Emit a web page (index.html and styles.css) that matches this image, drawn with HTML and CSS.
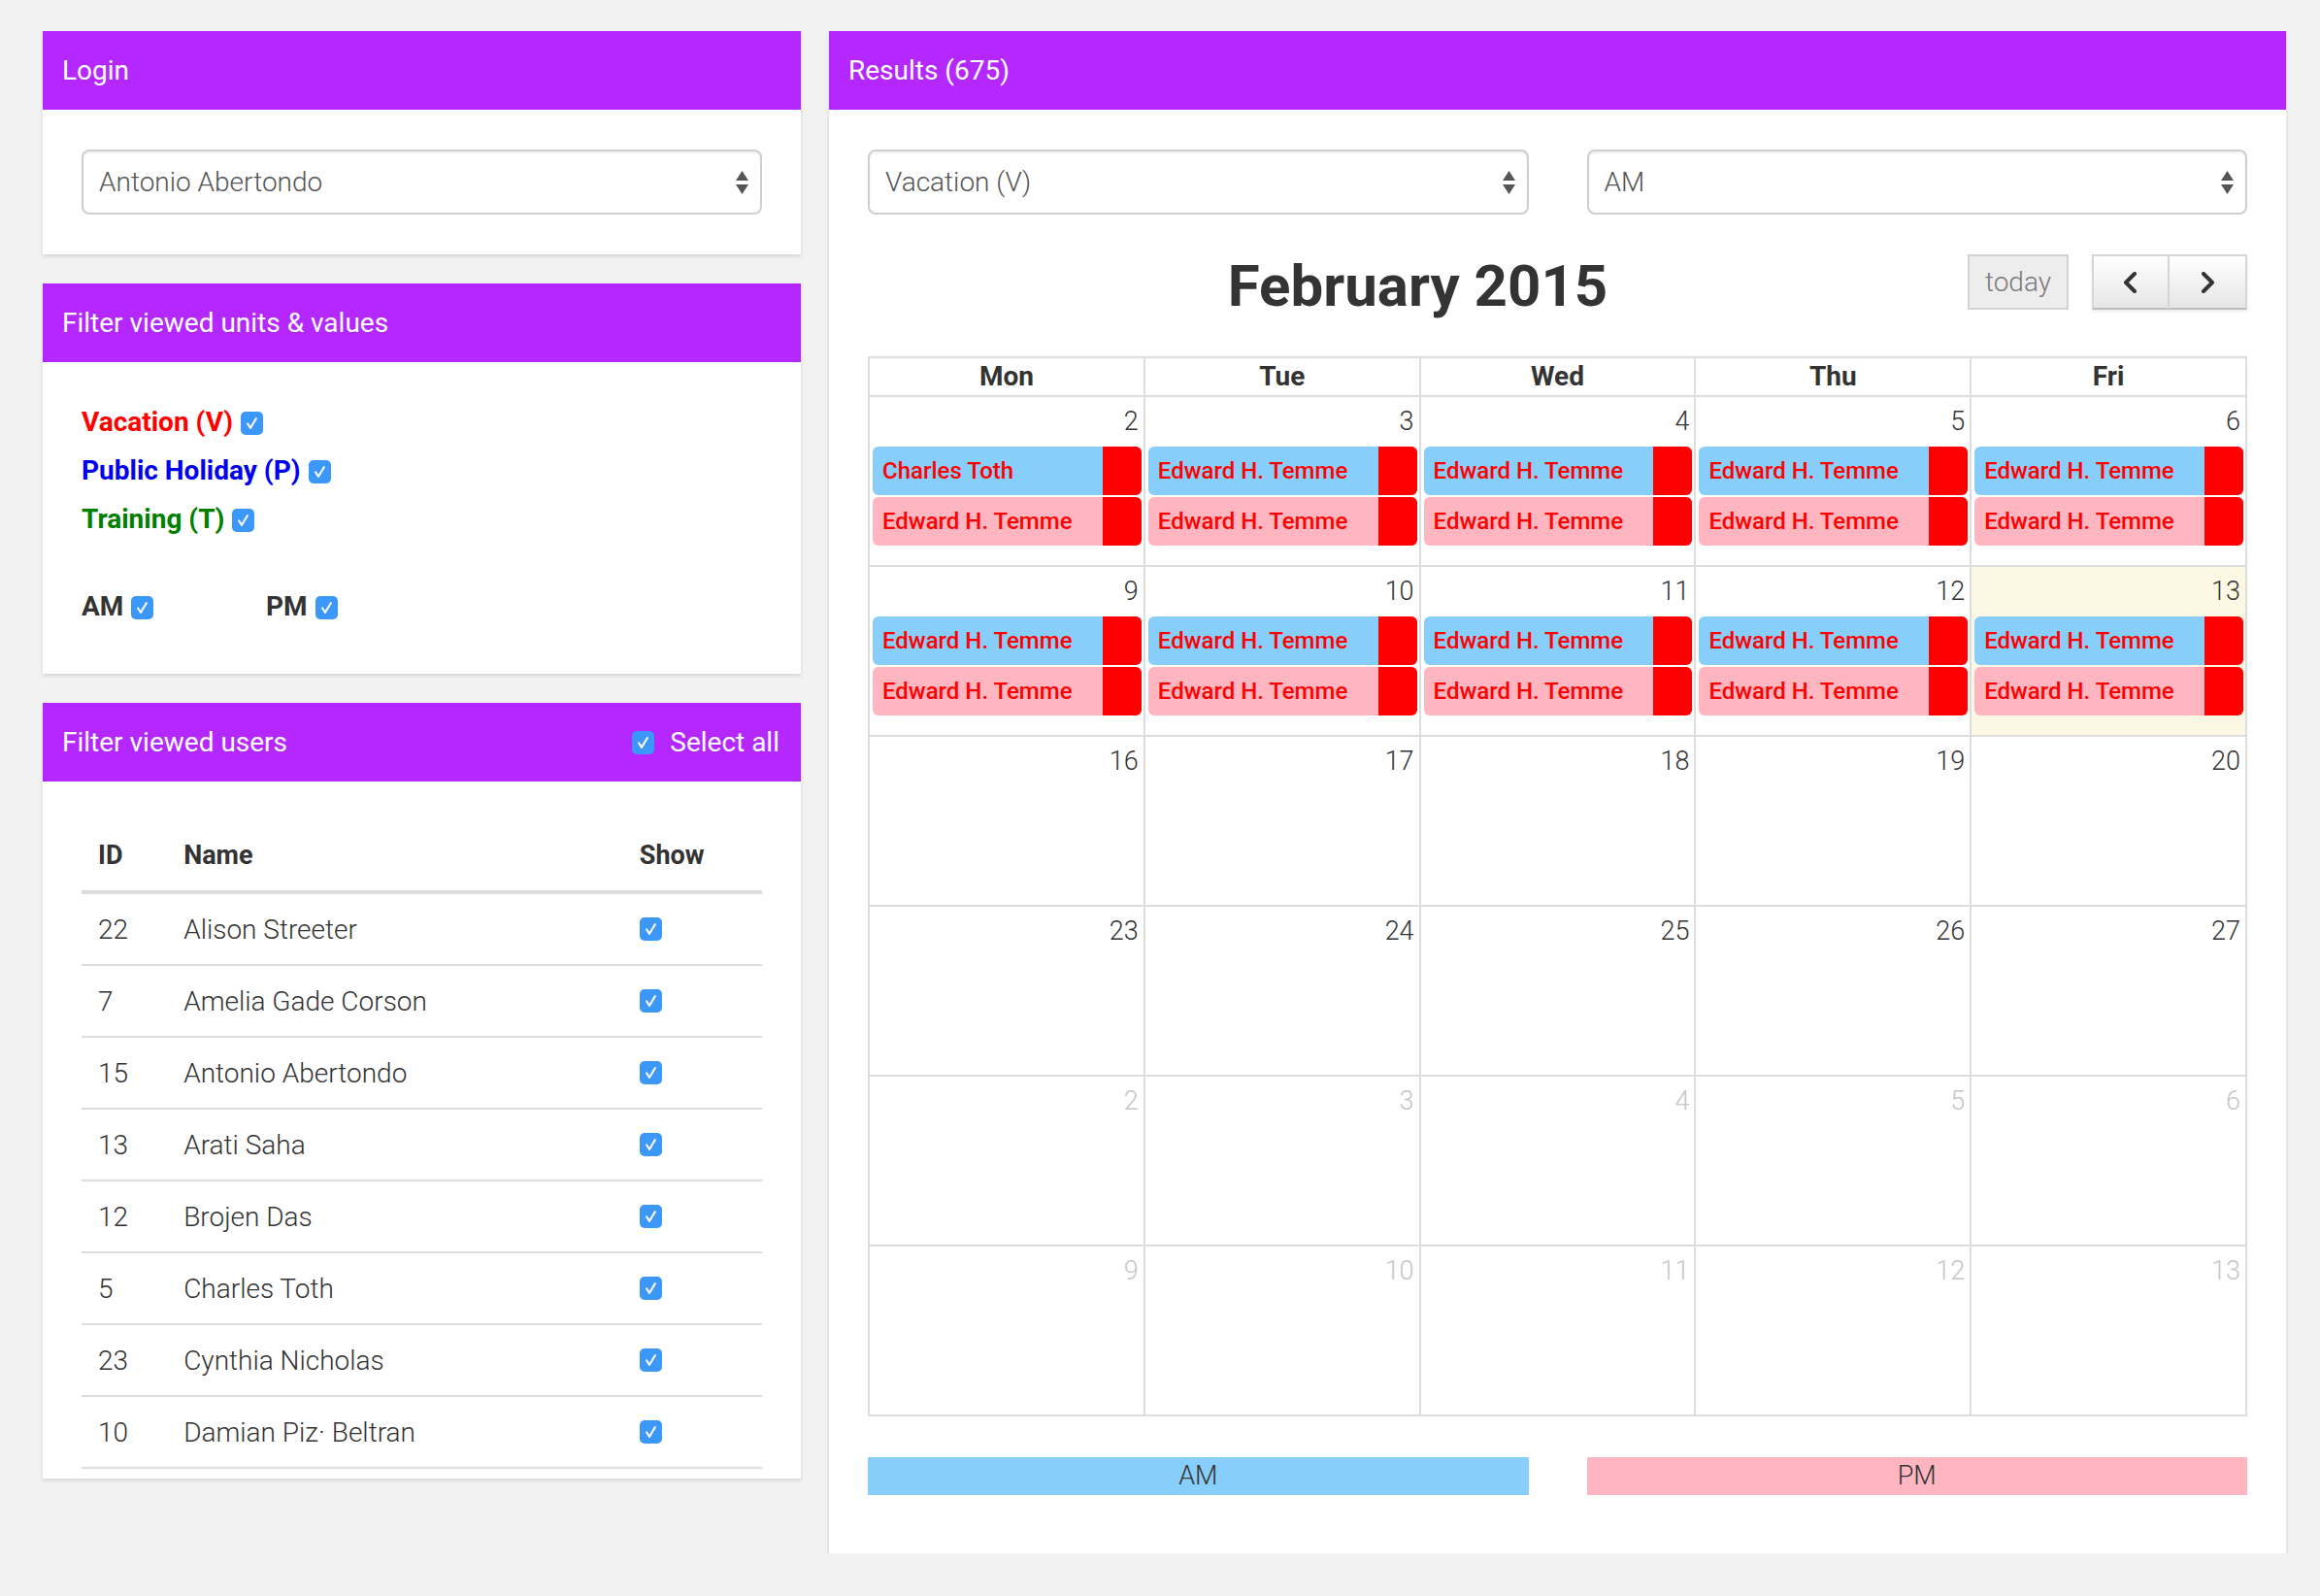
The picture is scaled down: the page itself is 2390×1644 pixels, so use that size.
FILE: index.html
```html
<!DOCTYPE html>
<html>
<head>
<meta charset="utf-8">
<title>Calendar</title>
<link rel="stylesheet" href="styles.css">
</head>
<body>
<div class="page">
  <div class="left-col">
    <section class="panel">
      <header class="panel-head">Login</header>
      <div class="panel-body login-body">
        <div class="select">
          <span class="select-text">Antonio Abertondo</span>
          <svg class="arrows" width="13" height="24" viewBox="0 0 13 24"><polygon points="0,10 6.5,0 13,10" fill="#555"/><polygon points="0,14 13,14 6.5,24" fill="#555"/></svg>
        </div>
      </div>
    </section>

    <section class="panel">
      <header class="panel-head">Filter viewed units &amp; values</header>
      <div class="panel-body units-body">
        <div class="unit unit-v">Vacation (V)<span class="cb"><svg viewBox="0 0 24 24"><polyline points="7.5,12.5 10.5,17 16.5,7" fill="none" stroke="#fff" stroke-width="2.2" stroke-linecap="round" stroke-linejoin="round"/></svg></span></div>
        <div class="unit unit-p">Public Holiday (P)<span class="cb"><svg viewBox="0 0 24 24"><polyline points="7.5,12.5 10.5,17 16.5,7" fill="none" stroke="#fff" stroke-width="2.2" stroke-linecap="round" stroke-linejoin="round"/></svg></span></div>
        <div class="unit unit-t">Training (T)<span class="cb"><svg viewBox="0 0 24 24"><polyline points="7.5,12.5 10.5,17 16.5,7" fill="none" stroke="#fff" stroke-width="2.2" stroke-linecap="round" stroke-linejoin="round"/></svg></span></div>
        <div class="ampm">
          <div class="half">AM<span class="cb"><svg viewBox="0 0 24 24"><polyline points="7.5,12.5 10.5,17 16.5,7" fill="none" stroke="#fff" stroke-width="2.2" stroke-linecap="round" stroke-linejoin="round"/></svg></span></div>
          <div class="half">PM<span class="cb"><svg viewBox="0 0 24 24"><polyline points="7.5,12.5 10.5,17 16.5,7" fill="none" stroke="#fff" stroke-width="2.2" stroke-linecap="round" stroke-linejoin="round"/></svg></span></div>
        </div>
      </div>
    </section>

    <section class="panel">
      <header class="panel-head users-head">
        <span>Filter viewed users</span>
        <span class="select-all"><span class="cb"><svg viewBox="0 0 24 24"><polyline points="7.5,12.5 10.5,17 16.5,7" fill="none" stroke="#fff" stroke-width="2.2" stroke-linecap="round" stroke-linejoin="round"/></svg></span>Select all</span>
      </header>
      <div class="panel-body users-body">
        <table class="users">
          <colgroup><col class="c-id"><col class="c-name"><col class="c-show"></colgroup>
          <thead><tr><th>ID</th><th>Name</th><th>Show</th></tr></thead>
          <tbody>
            <tr><td>22</td><td>Alison Streeter</td><td><span class="cb"><svg viewBox="0 0 24 24"><polyline points="7.5,12.5 10.5,17 16.5,7" fill="none" stroke="#fff" stroke-width="2.2" stroke-linecap="round" stroke-linejoin="round"/></svg></span></td></tr>
            <tr><td>7</td><td>Amelia Gade Corson</td><td><span class="cb"><svg viewBox="0 0 24 24"><polyline points="7.5,12.5 10.5,17 16.5,7" fill="none" stroke="#fff" stroke-width="2.2" stroke-linecap="round" stroke-linejoin="round"/></svg></span></td></tr>
            <tr><td>15</td><td>Antonio Abertondo</td><td><span class="cb"><svg viewBox="0 0 24 24"><polyline points="7.5,12.5 10.5,17 16.5,7" fill="none" stroke="#fff" stroke-width="2.2" stroke-linecap="round" stroke-linejoin="round"/></svg></span></td></tr>
            <tr><td>13</td><td>Arati Saha</td><td><span class="cb"><svg viewBox="0 0 24 24"><polyline points="7.5,12.5 10.5,17 16.5,7" fill="none" stroke="#fff" stroke-width="2.2" stroke-linecap="round" stroke-linejoin="round"/></svg></span></td></tr>
            <tr><td>12</td><td>Brojen Das</td><td><span class="cb"><svg viewBox="0 0 24 24"><polyline points="7.5,12.5 10.5,17 16.5,7" fill="none" stroke="#fff" stroke-width="2.2" stroke-linecap="round" stroke-linejoin="round"/></svg></span></td></tr>
            <tr><td>5</td><td>Charles Toth</td><td><span class="cb"><svg viewBox="0 0 24 24"><polyline points="7.5,12.5 10.5,17 16.5,7" fill="none" stroke="#fff" stroke-width="2.2" stroke-linecap="round" stroke-linejoin="round"/></svg></span></td></tr>
            <tr><td>23</td><td>Cynthia Nicholas</td><td><span class="cb"><svg viewBox="0 0 24 24"><polyline points="7.5,12.5 10.5,17 16.5,7" fill="none" stroke="#fff" stroke-width="2.2" stroke-linecap="round" stroke-linejoin="round"/></svg></span></td></tr>
            <tr><td>10</td><td>Damian Piz· Beltran</td><td><span class="cb"><svg viewBox="0 0 24 24"><polyline points="7.5,12.5 10.5,17 16.5,7" fill="none" stroke="#fff" stroke-width="2.2" stroke-linecap="round" stroke-linejoin="round"/></svg></span></td></tr>
          </tbody>
        </table>
      </div>
    </section>
  </div>

  <section class="panel results">
    <header class="panel-head">Results (675)</header>
    <div class="panel-body results-body">
      <div class="two-col">
        <div class="select">
          <span class="select-text">Vacation (V)</span>
          <svg class="arrows" width="13" height="24" viewBox="0 0 13 24"><polygon points="0,10 6.5,0 13,10" fill="#555"/><polygon points="0,14 13,14 6.5,24" fill="#555"/></svg>
        </div>
        <div class="select">
          <span class="select-text">AM</span>
          <svg class="arrows" width="13" height="24" viewBox="0 0 13 24"><polygon points="0,10 6.5,0 13,10" fill="#555"/><polygon points="0,14 13,14 6.5,24" fill="#555"/></svg>
        </div>
      </div>

      <div class="toolbar">
        <h2 class="cal-title">February 2015</h2>
        <button class="btn-today">today</button>
        <div class="btn-group">
          <button class="btn-nav"><svg width="18" height="22" viewBox="0 0 18 22"><polyline points="13,2 4,11 13,20" fill="none" stroke="#333" stroke-width="4" stroke-linecap="round" stroke-linejoin="round"/></svg></button>
          <button class="btn-nav"><svg width="18" height="22" viewBox="0 0 18 22"><polyline points="5,2 14,11 5,20" fill="none" stroke="#333" stroke-width="4" stroke-linecap="round" stroke-linejoin="round"/></svg></button>
        </div>
      </div>

      <div class="cal">
        <div class="dow">Mon</div><div class="dow">Tue</div><div class="dow">Wed</div><div class="dow">Thu</div><div class="dow">Fri</div>

        <div class="day"><div class="num">2</div><div class="ev am"><span class="ev-name">Charles Toth</span><span class="ev-tag"></span></div><div class="ev pm"><span class="ev-name">Edward H. Temme</span><span class="ev-tag"></span></div></div>
        <div class="day"><div class="num">3</div><div class="ev am"><span class="ev-name">Edward H. Temme</span><span class="ev-tag"></span></div><div class="ev pm"><span class="ev-name">Edward H. Temme</span><span class="ev-tag"></span></div></div>
        <div class="day"><div class="num">4</div><div class="ev am"><span class="ev-name">Edward H. Temme</span><span class="ev-tag"></span></div><div class="ev pm"><span class="ev-name">Edward H. Temme</span><span class="ev-tag"></span></div></div>
        <div class="day"><div class="num">5</div><div class="ev am"><span class="ev-name">Edward H. Temme</span><span class="ev-tag"></span></div><div class="ev pm"><span class="ev-name">Edward H. Temme</span><span class="ev-tag"></span></div></div>
        <div class="day"><div class="num">6</div><div class="ev am"><span class="ev-name">Edward H. Temme</span><span class="ev-tag"></span></div><div class="ev pm"><span class="ev-name">Edward H. Temme</span><span class="ev-tag"></span></div></div>

        <div class="day"><div class="num">9</div><div class="ev am"><span class="ev-name">Edward H. Temme</span><span class="ev-tag"></span></div><div class="ev pm"><span class="ev-name">Edward H. Temme</span><span class="ev-tag"></span></div></div>
        <div class="day"><div class="num">10</div><div class="ev am"><span class="ev-name">Edward H. Temme</span><span class="ev-tag"></span></div><div class="ev pm"><span class="ev-name">Edward H. Temme</span><span class="ev-tag"></span></div></div>
        <div class="day"><div class="num">11</div><div class="ev am"><span class="ev-name">Edward H. Temme</span><span class="ev-tag"></span></div><div class="ev pm"><span class="ev-name">Edward H. Temme</span><span class="ev-tag"></span></div></div>
        <div class="day"><div class="num">12</div><div class="ev am"><span class="ev-name">Edward H. Temme</span><span class="ev-tag"></span></div><div class="ev pm"><span class="ev-name">Edward H. Temme</span><span class="ev-tag"></span></div></div>
        <div class="day today"><div class="num">13</div><div class="ev am"><span class="ev-name">Edward H. Temme</span><span class="ev-tag"></span></div><div class="ev pm"><span class="ev-name">Edward H. Temme</span><span class="ev-tag"></span></div></div>

        <div class="day"><div class="num">16</div></div>
        <div class="day"><div class="num">17</div></div>
        <div class="day"><div class="num">18</div></div>
        <div class="day"><div class="num">19</div></div>
        <div class="day"><div class="num">20</div></div>

        <div class="day"><div class="num">23</div></div>
        <div class="day"><div class="num">24</div></div>
        <div class="day"><div class="num">25</div></div>
        <div class="day"><div class="num">26</div></div>
        <div class="day"><div class="num">27</div></div>

        <div class="day other"><div class="num">2</div></div>
        <div class="day other"><div class="num">3</div></div>
        <div class="day other"><div class="num">4</div></div>
        <div class="day other"><div class="num">5</div></div>
        <div class="day other"><div class="num">6</div></div>

        <div class="day other"><div class="num">9</div></div>
        <div class="day other"><div class="num">10</div></div>
        <div class="day other"><div class="num">11</div></div>
        <div class="day other"><div class="num">12</div></div>
        <div class="day other"><div class="num">13</div></div>
      </div>

      <div class="two-col legend">
        <div class="legend-am">AM</div>
        <div class="legend-pm">PM</div>
      </div>
    </div>
  </section>
</div>
</body>
</html>
```

FILE: styles.css
```css
* { box-sizing: border-box; }

html, body {
  margin: 0;
  padding: 0;
}

body {
  background: #f2f2f2;
  font-family: Roboto, "Liberation Sans", Arial, sans-serif;
  font-size: 28px;
  font-weight: 300;
  color: #333;
}

.page {
  display: flex;
  align-items: flex-start;
  gap: 29px;
  padding: 32px 35px 0 44px;
}

.left-col {
  width: 781px;
  flex: none;
  display: flex;
  flex-direction: column;
  gap: 30px;
}

.panel {
  background: #fff;
  box-shadow: 0 2px 4px rgba(0, 0, 0, 0.13);
}

.panel-head {
  height: 81px;
  line-height: 81px;
  padding: 0 20px;
  background: #b428ff;
  color: #fff;
  font-size: 28px;
  font-weight: 400;
}

.panel-body { padding: 41px 40px; }

/* select */
.select {
  height: 67px;
  border: 2px solid #cfcfcf;
  border-radius: 8px;
  box-shadow: inset 0 2px 2px rgba(0, 0, 0, 0.06);
  display: flex;
  align-items: center;
  justify-content: space-between;
  padding: 0 12px 0 16px;
  color: #555;
  font-size: 28px;
  font-weight: 300;
}

.arrows { flex: none; }

/* checkbox */
.cb {
  display: inline-flex;
  width: 23px;
  height: 24px;
  border-radius: 5px;
  background: #3b97f8;
  vertical-align: middle;
  flex: none;
}
.cb svg { width: 100%; height: 100%; display: block; }

/* units */
.units-body { padding: 36px 40px 45px; }

.unit {
  display: flex;
  align-items: center;
  height: 50px;
  font-weight: 700;
  font-size: 28px;
}
.unit .cb { margin-left: 8px; margin-top: 4px; }
.unit-v { color: #ff0000; }
.unit-p { color: #0000f0; }
.unit-t { color: #008000; }

.ampm {
  display: flex;
  margin-top: 40px;
}
.half {
  width: 190px;
  height: 50px;
  display: flex;
  align-items: center;
  font-weight: 700;
  color: #333;
}
.half .cb { margin-left: 8px; margin-top: 4px; }

/* users */
.users-head {
  display: flex;
  justify-content: space-between;
  align-items: center;
  padding-right: 22px;
}
.select-all {
  display: flex;
  align-items: center;
}
.select-all .cb { margin-right: 16px; }

.users-body { padding: 40px 40px 10px; }

.users {
  width: 100%;
  border-collapse: separate;
  border-spacing: 0;
  table-layout: fixed;
}
.c-id { width: 88px; }
.c-name { width: 469px; }
.c-show { width: 143px; }

.users th {
  height: 76px;
  padding: 0 17px;
  text-align: left;
  font-weight: 700;
  font-size: 27px;
  border-bottom: 4px solid #ddd;
  vertical-align: middle;
}
.users td {
  height: 74px;
  padding: 0 17px;
  border-bottom: 2px solid #ddd;
  vertical-align: middle;
  font-size: 28px;
}
.users td .cb { display: flex; }

/* results */
.results {
  width: 1501px;
  flex: none;
}
.results-body { padding: 41px 40px 60px; }

.two-col {
  display: grid;
  grid-template-columns: 1fr 1fr;
  gap: 60px;
}

.toolbar {
  display: flex;
  align-items: center;
  height: 57px;
  margin-top: 41px;
  margin-bottom: 48px;
}
.cal-title {
  flex: 1;
  margin: 8px 0 0;
  text-align: center;
  font-size: 60px;
  font-weight: 700;
  line-height: 57px;
  color: #333;
}

button {
  font-family: inherit;
  cursor: default;
}

.btn-today {
  width: 104px;
  height: 57px;
  margin-right: 24px;
  padding: 0;
  background: #ededed;
  border: 2px solid #d3d3d3;
  border-radius: 0;
  color: #7a7a7a;
  font-size: 28px;
  font-weight: 300;
}

.btn-group {
  display: flex;
  box-shadow: 0 2px 3px rgba(0, 0, 0, 0.08);
}
.btn-nav {
  width: 80px;
  height: 57px;
  padding: 0;
  display: flex;
  align-items: center;
  justify-content: center;
  background: linear-gradient(#ffffff, #e6e6e6);
  border: 2px solid #d6d6d6;
  border-bottom-color: #bdbdbd;
  border-radius: 0;
}
.btn-nav + .btn-nav { border-left: none; }

/* calendar */
.cal {
  display: grid;
  grid-template-columns: repeat(5, 1fr);
  border-top: 2px solid #ddd;
  border-left: 2px solid #ddd;
}
.dow {
  height: 40px;
  line-height: 38px;
  text-align: center;
  font-weight: 700;
  font-size: 28px;
  border-right: 2px solid #ddd;
  border-bottom: 2px solid #ddd;
}
.day {
  height: 175px;
  border-right: 2px solid #ddd;
  border-bottom: 2px solid #ddd;
  padding: 0 2px 0 3px;
}
.day.today { background: #fcf8e3; }
.num {
  height: 51px;
  line-height: 50px;
  text-align: right;
  padding-right: 3px;
  font-size: 27px;
  font-weight: 300;
  color: #333;
}
.day.other .num { color: #c6c6c6; }

.ev {
  display: flex;
  height: 50px;
  border-radius: 6px;
  overflow: hidden;
  margin-bottom: 2px;
}
.ev.am { background: #87cefa; }
.ev.pm { background: #ffb6c1; }
.ev-name {
  flex: 1;
  padding-left: 10px;
  line-height: 50px;
  color: #ff0000;
  font-size: 24px;
  font-weight: 500;
  white-space: nowrap;
  overflow: hidden;
}
.ev-tag {
  width: 40px;
  flex: none;
  background: #ff0000;
}

.legend {
  margin-top: 42px;
}
.legend-am, .legend-pm {
  height: 39px;
  line-height: 39px;
  text-align: center;
  font-size: 27px;
  font-weight: 300;
  color: #333;
}
.legend-am { background: #87cefa; }
.legend-pm { background: #ffb6c1; }
```
